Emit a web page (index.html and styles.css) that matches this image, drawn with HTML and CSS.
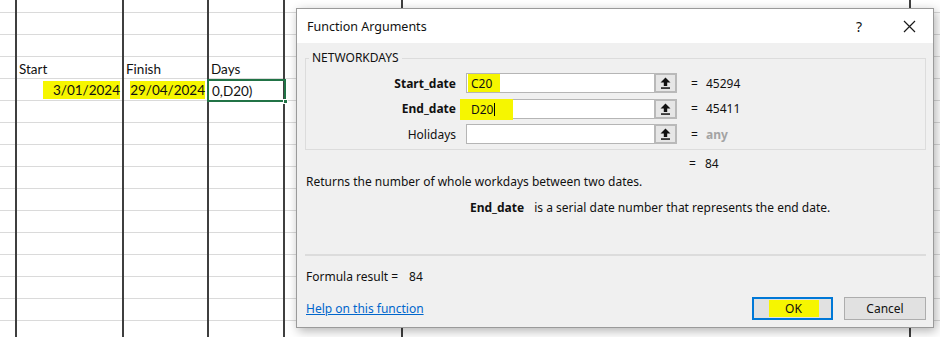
FILE: index.html
```html
<!DOCTYPE html>
<html lang="en">
<head>
    <meta charset="UTF-8">
    <title>Function Arguments</title>
    <link rel="stylesheet" href="styles.css">
</head>
<body>

    <!-- worksheet behind the dialog -->
    <div class="sheet">
        <div class="vline col-b"></div>
        <div class="vline col-c"></div>
        <div class="vline col-d"></div>
        <div class="vline col-e"></div>
        <div class="vline col-f"></div>
        <div class="vline col-g"></div>

        <div class="cell col-b row-4">Start</div>
        <div class="cell col-c row-4">Finish</div>
        <div class="cell col-d row-4">Days</div>

        <div class="cell num col-b row-5"><span class="mark mark-wide">3/01/2024</span></div>
        <div class="cell num col-c row-5"><span class="mark">29/04/2024</span></div>
        <div class="cell active col-d row-5">0,D20)<span class="fill-handle"></span></div>
    </div>

    <div class="dialog">
        <div class="titlebar">
            <span class="title">Function Arguments</span>
            <span class="help-btn">?</span>
            <svg class="close-btn" width="13" height="13" viewBox="0 0 13 13">
                <path d="M1 1 L12 12 M12 1 L1 12" stroke="#1a1a1a" stroke-width="1.2" fill="none"/>
            </svg>
        </div>

        <div class="dialog-body">
            <fieldset class="args">
                <legend>NETWORKDAYS</legend>

                <div class="arg-name bold">Start_date</div>
                <div class="arg-input"><span class="mark mark-input">C20</span></div>
                <div class="ref-btn"><svg width="11" height="12" viewBox="0 0 11 12"><path d="M5.5 0.5 L10.5 5.5 H7.2 V9 H3.8 V5.5 H0.5 Z" fill="#111"/><rect x="1" y="10.3" width="9" height="1.5" fill="#111"/></svg></div>
                <div class="eq">=</div>
                <div class="arg-value">45294</div>

                <div class="arg-name bold">End_date</div>
                <div class="arg-input"><span class="mark mark-input mark-end">D20<span class="caret"></span></span></div>
                <div class="ref-btn"><svg width="11" height="12" viewBox="0 0 11 12"><path d="M5.5 0.5 L10.5 5.5 H7.2 V9 H3.8 V5.5 H0.5 Z" fill="#111"/><rect x="1" y="10.3" width="9" height="1.5" fill="#111"/></svg></div>
                <div class="eq">=</div>
                <div class="arg-value">45411</div>

                <div class="arg-name">Holidays</div>
                <div class="arg-input"></div>
                <div class="ref-btn"><svg width="11" height="12" viewBox="0 0 11 12"><path d="M5.5 0.5 L10.5 5.5 H7.2 V9 H3.8 V5.5 H0.5 Z" fill="#111"/><rect x="1" y="10.3" width="9" height="1.5" fill="#111"/></svg></div>
                <div class="eq">=</div>
                <div class="arg-value muted">any</div>
            </fieldset>

            <div class="total"><span class="eq">=</span><span>84</span></div>

            <p class="desc">Returns the number of whole workdays between two dates.</p>
            <p class="arg-help"><b>End_date</b><span>is a serial date number that represents the end date.</span></p>

            <div class="separator"></div>

            <p class="formula">Formula result =<span class="formula-value">84</span></p>

            <div class="footer">
                <a href="javascript:void(0)" class="help-link">Help on this function</a>
                <div class="buttons">
                    <button class="btn btn-ok"><span class="mark mark-ok">OK</span></button>
                    <button class="btn">Cancel</button>
                </div>
            </div>
        </div>
    </div>

</body>
</html>
```

FILE: styles.css
```css
:root {
    --grid-line: #dadada;
    --border-line: #3f3f3f;
    --highlight: #f6f600;
    --dialog-bg: #f0f0f0;
    --button-bg: #e1e1e1;
    --button-border: #adadad;
    --accent: #0078d7;
    --link: #0066cc;
}

* {
    box-sizing: border-box;
}

body {
    margin: 0;
    width: 940px;
    height: 337px;
    overflow: hidden;
    position: relative;
    background: #fff;
    font-family: 'Noto Sans', sans-serif;
    color: #111;
}

/* worksheet */
.sheet {
    display: grid;
    grid-template-columns: 16px 107px 85px 76px 118px 508px 1fr;
    grid-template-rows: repeat(15, 22px) 16px;
    margin-top: -9px;
    background: repeating-linear-gradient(to bottom, transparent 0 21px, var(--grid-line) 21px 22px);
    font-family: 'Lato', sans-serif;
    font-size: 13.5px;
}

.vline {
    grid-row: 1 / -1;
    border-left: 2px solid var(--border-line);
    margin-left: -1px;
}

.col-b { grid-column: 2; }
.col-c { grid-column: 3; }
.col-d { grid-column: 4; }
.col-e { grid-column: 5; }
.col-f { grid-column: 6; }
.col-g { grid-column: 7; }
.row-4 { grid-row: 4; }
.row-5 { grid-row: 5; }

.cell {
    display: flex;
    align-items: flex-end;
    padding: 0 3px 2px 3px;
    white-space: nowrap;
    position: relative;
}

.num {
    justify-content: flex-end;
    padding: 2px 3px 2px 0;
    align-items: stretch;
}

.num .mark {
    display: flex;
    align-items: flex-end;
    padding-bottom: 1px;
}

.mark {
    background: var(--highlight);
}

.mark-wide {
    padding-left: 10px;
}

.active {
    border: 2px solid #217346;
    margin: 0 -2px -1px -1px;
    padding-left: 3px;
    padding-bottom: 1px;
}

.fill-handle {
    position: absolute;
    right: -4px;
    bottom: -4px;
    width: 5px;
    height: 5px;
    background: #217346;
    border: 1px solid #fff;
}

/* dialog */
.dialog {
    position: absolute;
    left: 296px;
    top: 8px;
    width: 638px;
    height: 320px;
    background: var(--dialog-bg);
    border: 1px solid #9a9a9a;
    box-shadow: 2px 3px 10px rgba(0, 0, 0, 0.3);
    font-size: 12px;
}

.titlebar {
    height: 34px;
    background: #fff;
    display: flex;
    align-items: center;
    padding: 0 17px 0 10px;
}

.title {
    flex: 1;
    font-size: 12.5px;
}

.help-btn {
    font-size: 14px;
    margin-right: 41px;
}

.dialog-body {
    padding: 0 7px 0 8px;
}

.args {
    margin: 7px 0 0 0;
    padding: 7px 0 5px 0;
    border: 1px solid #dcdcdc;
    display: grid;
    grid-template-columns: 160px 188px 23px 29px 1fr;
    grid-template-rows: 20px 20px 20px;
    row-gap: 5.5px;
    align-items: center;
}

.args legend {
    padding: 0 3px;
    margin-left: 3px;
    line-height: 16px;
}

.arg-name {
    text-align: right;
    padding-right: 10px;
}

.bold {
    font-weight: 700;
}

.arg-input {
    height: 20px;
    background: #fff;
    border: 1px solid #b5b5b5;
    border-right: none;
    display: flex;
    align-items: stretch;
    padding-left: 1px;
}

.mark-input {
    display: flex;
    align-items: center;
    padding: 0 8px 0 3px;
}

.mark-end {
    margin-left: -8px;
    margin-top: -1px;
    margin-bottom: -2px;
    padding: 0 18px 0 11px;
}

.caret {
    width: 1px;
    height: 13px;
    background: #000;
}

.ref-btn {
    height: 20px;
    background: #e6e6e6;
    border: 2px solid #b9b9b9;
    display: flex;
    align-items: center;
    justify-content: center;
}

.eq {
    padding-left: 14px;
}

.muted {
    color: #a3a3a3;
    font-weight: 700;
}

.total {
    margin: 6px 0 0 384px;
    display: flex;
    gap: 9px;
    line-height: 16px;
}

.total .eq {
    padding-left: 0;
}

.desc {
    margin: 2px 0 0 1px;
    line-height: 16px;
}

.arg-help {
    margin: 10px 0 0 165px;
    line-height: 16px;
}

.arg-help span {
    margin-left: 10px;
}

.separator {
    height: 2px;
    background: #dcdcdc;
    margin: 38px 0 0 0;
}

.formula {
    margin: 13px 0 0 1px;
    line-height: 16px;
}

.formula-value {
    margin-left: 11px;
}

.footer {
    margin-top: 12px;
    display: flex;
    justify-content: space-between;
    align-items: center;
}

.help-link {
    color: var(--link);
    margin-left: 1px;
}

.buttons {
    display: flex;
    gap: 11px;
}

.btn {
    width: 82px;
    height: 23px;
    background: var(--button-bg);
    border: 1px solid var(--button-border);
    font-family: 'Noto Sans', sans-serif;
    font-size: 12px;
    color: #111;
    padding: 0;
    display: flex;
    align-items: center;
    justify-content: center;
}

.btn-ok {
    width: 81px;
    border: 2px solid var(--accent);
}

.mark-ok {
    width: 50px;
    height: 17px;
    margin-left: 2px;
    display: flex;
    align-items: center;
    justify-content: center;
}
```
